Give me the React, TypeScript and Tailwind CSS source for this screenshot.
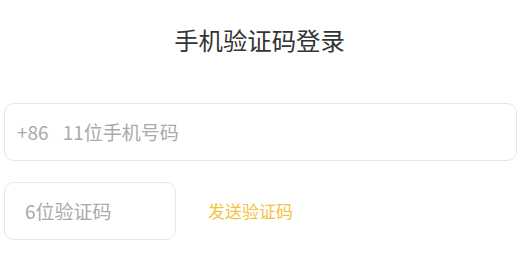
export default function App() {
  return (
    <div className="w-[523px] h-[262px] bg-white flex flex-col pl-1 pr-[6px]" style={{ fontFamily: '"Noto Sans CJK SC", "Noto Sans", sans-serif' }}>
      <div className="h-[78px] flex items-center justify-center pt-[2px] pr-[2px] text-[24.4px] text-[#333333]">手机验证码登录</div>
      <div className="mt-[25px] h-[58px] border border-[#e6e6e6] rounded-[10px] flex items-center pl-3 text-[19px] text-[#aaaaaa]">
        <span>+86</span>
        <span className="ml-[14px]">11位手机号码</span>
      </div>
      <div className="mt-[21px] flex items-center">
        <div className="w-[172px] h-[58px] border border-[#e6e6e6] rounded-[10px] flex items-center pl-5 text-[19px] text-[#aaaaaa]">6位验证码</div>
        <div className="ml-[32px] text-[17px] text-[#f3c33f]">发送验证码</div>
      </div>
    </div>
  );
}
